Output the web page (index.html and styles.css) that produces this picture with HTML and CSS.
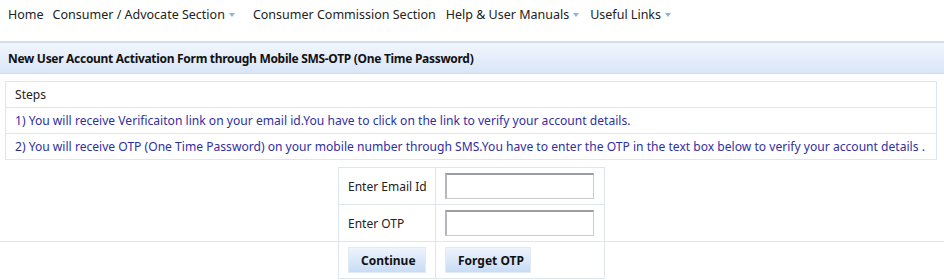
FILE: index.html
```html
<!DOCTYPE html>
<html lang="en">
<head>
    <meta charset="UTF-8">
    <title>New User Account Activation</title>
    <link rel="stylesheet" href="styles.css">
</head>
<body>
    <ul class="nav">
        <li>Home</li>
        <li>Consumer / Advocate Section <span class="caret"></span></li>
        <li class="wide">Consumer Commission Section</li>
        <li>Help &amp; User Manuals <span class="caret"></span></li>
        <li>Useful Links <span class="caret"></span></li>
    </ul>

    <div class="title-bar">New User Account Activation Form through Mobile SMS-OTP (One Time Password)</div>

    <table class="steps">
        <tr><td class="head">Steps</td></tr>
        <tr><td>1) You will receive Verificaiton link on your email id.You have to click on the link to verify your account details.</td></tr>
        <tr><td>2) You will receive OTP (One Time Password) on your mobile number through SMS.You have to enter the OTP in the text box below to verify your account details .</td></tr>
    </table>

    <div class="form-wrap">
        <table class="otp-form">
            <tr>
                <td class="label">Enter Email Id</td>
                <td class="field"><input type="text"></td>
            </tr>
            <tr>
                <td class="label">Enter OTP</td>
                <td class="field"><input type="text"></td>
            </tr>
            <tr>
                <td class="label"><button>Continue</button></td>
                <td class="field"><button>Forget OTP</button></td>
            </tr>
        </table>
    </div>
</body>
</html>
```

FILE: styles.css
```css
body {
    margin: 0;
    font-family: 'Noto Sans', sans-serif;
    font-size: 12px;
    color: #222;
    background: white;
}
.nav {
    list-style: none;
    margin: 0;
    padding: 6px 0 0 8px;
    height: 33px;
    box-sizing: border-box;
    display: flex;
    gap: 9px;
    font-size: 12.5px;
    color: #222;
}
.nav li {
    display: flex;
    align-items: center;
    height: 17px;
    white-space: nowrap;
}
.nav li.wide {
    margin-left: 7px;
    margin-right: 1px;
}
.caret {
    display: inline-block;
    margin-left: 4px;
    margin-right: 2px;
    border-left: 3.5px solid transparent;
    border-right: 3.5px solid transparent;
    border-top: 4px solid #8cb3db;
}
.title-bar {
    margin-top: 8px;
    border-top: 2px solid #d3deec;
    border-bottom: 1px solid #cfdcee;
    background: linear-gradient(#f1f6fd, #d9e6f8);
    height: 30px;
    line-height: 31px;
    padding-left: 8px;
    font-weight: bold;
    font-size: 12px;
    letter-spacing: -0.3px;
    color: #111;
    white-space: nowrap;
}
.steps {
    margin: 7px 7px 0 5px;
    width: calc(100% - 12px);
    border-collapse: collapse;
    border: 1px solid #dde5ef;
}
.steps td {
    border-top: 1px solid #dde5ef;
    height: 25px;
    padding: 0 0 0 9px;
    color: #2f2f9f;
    font-size: 12.1px;
    white-space: nowrap;
}
.steps td.head {
    color: #222;
}
.form-wrap {
    margin-top: 7px;
    background: linear-gradient(#dfe6f0, #dfe6f0) 0 74px / 100% 1px no-repeat;
}
.otp-form {
    margin-left: 338px;
    border-collapse: collapse;
    border: 1px solid #dde5ef;
    table-layout: fixed;
    width: 267px;
}
.otp-form td {
    border: 1px solid #dde5ef;
    height: 37px;
    box-sizing: border-box;
    white-space: nowrap;
}
.otp-form td.label {
    width: 97px;
    padding: 0 0 0 9px;
    font-size: 12px;
}
.otp-form td.field {
    padding: 0 0 0 9px;
}
.otp-form input {
    display: block;
    width: 149px;
    height: 26px;
    box-sizing: border-box;
    border: 1px solid #c8ccd2;
    border-top: 2px solid #9a9ea4;
    border-left: 2px solid #b4b8be;
    margin: 0;
}
.otp-form button {
    display: block;
    background: linear-gradient(#eef4fd, #c8dcf6);
    border: 1px solid #e1e9f3;
    height: 26px;
    padding: 0 12px;
    font-family: inherit;
    font-weight: bold;
    font-size: 12px;
    color: #111;
}
.otp-form td.label button {
    width: 78px;
}
.otp-form td.field button {
    width: 86px;
}
```
